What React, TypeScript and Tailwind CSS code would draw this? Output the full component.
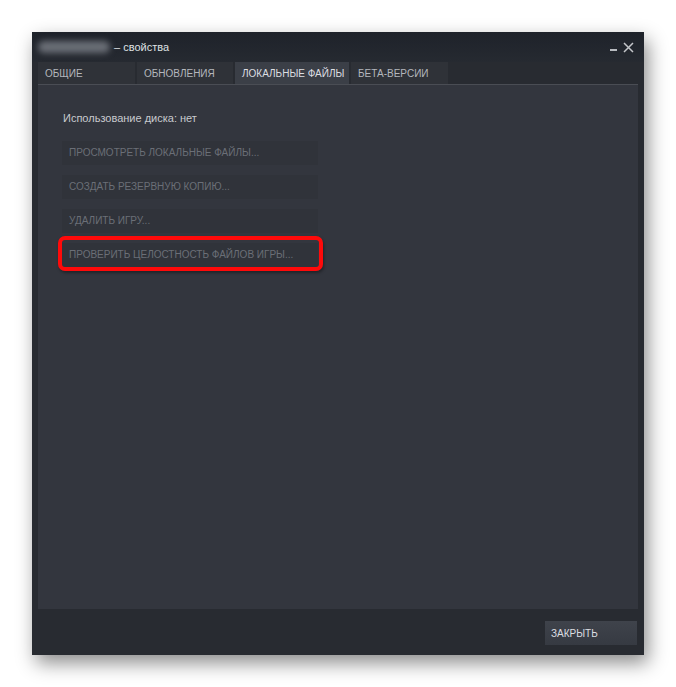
const font = "font-['Liberation_Sans',Arial,sans-serif]";

const tabs = [
  { label: "ОБЩИЕ", w: "w-[97px]" },
  { label: "ОБНОВЛЕНИЯ", w: "w-[96px]" },
  { label: "ЛОКАЛЬНЫЕ ФАЙЛЫ", w: "w-[114px]", active: true },
  { label: "БЕТА-ВЕРСИИ", w: "w-[97px]" },
];

const actions = [
  "ПРОСМОТРЕТЬ ЛОКАЛЬНЫЕ ФАЙЛЫ...",
  "СОЗДАТЬ РЕЗЕРВНУЮ КОПИЮ...",
  "УДАЛИТЬ ИГРУ...",
];

function ActionButton({ label }: { label: string }) {
  return (
    <div className="flex h-[24px] w-[256px] items-center bg-[#30333a] pl-[7px] text-[10px] whitespace-nowrap text-[#6b6f77]">
      {label}
    </div>
  );
}

export default function App() {
  return (
    <div className={`min-h-[687px] w-[676px] bg-white pt-[32px] pl-[32px] ${font}`}>
      <div className="flex h-[623px] w-[612px] flex-col bg-[#282b31] shadow-[4px_8px_18px_rgba(0,0,0,0.45)]">
        {/* title bar */}
        <div className="flex h-[30px] items-center bg-gradient-to-b from-[#1e222a] to-[#262a31] pr-[10px] pl-[4px]">
          <span className="ml-[2px] h-[12px] w-[72px] rounded-full bg-[#6a6e76] blur-[3px]" />
          <span className="ml-[4px] text-[11px] text-[#dfe1e4]">– свойства</span>
          <div className="ml-auto flex items-center gap-[6px] text-[#c4c6ca]">
            <span className="mt-[6px] h-[2px] w-[7px] bg-[#b8bbc0]" />
            <svg width="11" height="11" viewBox="0 0 11 11">
              <path d="M1 1L10 10M10 1L1 10" stroke="#c4c6ca" strokeWidth="1.5" />
            </svg>
          </div>
        </div>

        {/* tabs */}
        <div className="mx-[6px] flex h-[23px] gap-[2px] border-b border-[#4a4d54]">
          {tabs.map((t) => (
            <div
              key={t.label}
              className={`flex h-[22px] items-center pl-[7px] text-[10px] whitespace-nowrap ${t.w} ${
                t.active
                  ? "bg-[#3b3f47] text-[#dcdee2]"
                  : "bg-[#2f3238] text-[#b4b7bd]"
              }`}
            >
              {t.label}
            </div>
          ))}
        </div>

        {/* content */}
        <div className="mx-[6px] flex h-[524px] flex-col bg-[#33363e] pt-[25px] pl-[24px]">
          <div className="pl-[1px] text-[11px] text-[#c8cace]">Использование диска: нет</div>
          <div className="mt-[14px] flex flex-col items-start gap-[10px]">
            {actions.map((a) => (
              <ActionButton key={a} label={a} />
            ))}
            <div className="relative">
              <ActionButton label="ПРОВЕРИТЬ ЦЕЛОСТНОСТЬ ФАЙЛОВ ИГРЫ..." />
              <div className="absolute -top-[7px] -right-[5px] -bottom-[4px] -left-[4px] rounded-[7px] border-[4px] border-[#ff0a0a] shadow-[1px_2px_3px_rgba(0,0,0,0.35)]" />
            </div>
          </div>
        </div>

        {/* footer */}
        <div className="flex flex-1 items-start justify-end pt-[12px] pr-[7px]">
          <div className="flex h-[24px] w-[92px] items-center bg-gradient-to-b from-[#3f434b] to-[#363a42] pl-[6px] text-[10px] text-[#dcdee2]">
            ЗАКРЫТЬ
          </div>
        </div>
      </div>
    </div>
  );
}
